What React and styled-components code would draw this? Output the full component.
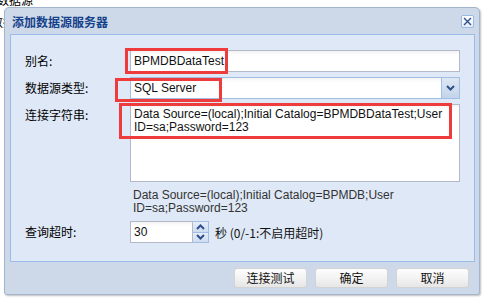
import React from 'react';
import styled, { createGlobalStyle } from 'styled-components';

const GlobalStyle = createGlobalStyle`
  html, body {
    margin: 0;
    padding: 0;
    background: #ffffff;
  }
  body {
    width: 488px;
    height: 303px;
    overflow: hidden;
    position: relative;
    font-family: 'Liberation Sans', 'Noto Sans CJK SC', sans-serif;
    font-size: 12px;
    color: #000;
  }
`;

const cjk = `'Noto Sans CJK SC', 'Liberation Sans', sans-serif`;
const latin = `'Liberation Sans', 'Noto Sans CJK SC', sans-serif`;

const PageBehind = styled.div`
  font-family: ${cjk};
  font-size: 12px;
  line-height: 22px;
  margin-top: -11px;
  margin-left: -9px;
  color: #000;
`;

const Dialog = styled.div`
  position: absolute;
  left: 4px;
  top: 7px;
  width: 476px;
  height: 288px;
  box-sizing: border-box;
  background: #cdd9e8;
  border: 1px solid #a3b5cc;
  border-radius: 5px 5px 3px 3px;
  box-shadow: 1px 1px 2px rgba(0, 0, 0, 0.25);
  display: flex;
  flex-direction: column;
`;

const Header = styled.div`
  height: 26px;
  display: flex;
  align-items: center;
  justify-content: space-between;
  padding: 0 5px 0 7px;
`;

const Title = styled.div`
  font-family: ${cjk};
  font-weight: bold;
  font-size: 12px;
  color: #15428b;
`;

const CloseButton = styled.div`
  width: 13px;
  height: 13px;
  box-sizing: border-box;
  border: 1px solid #99bbe8;
  border-radius: 2px;
  background: linear-gradient(#ffffff, #e4edf8);
  display: flex;
  align-items: center;
  justify-content: center;
`;

const Body = styled.div`
  margin: 0 4px 0 5px;
  height: 228px;
  box-sizing: border-box;
  background: #dfe8f6;
  border: 1px solid #99bbe8;
  padding: 15px 14px 0 14px;
  display: grid;
  grid-template-columns: 105px 330px;
  grid-template-rows: 22px 22px 78px 29px 22px;
  row-gap: 5px;
  align-items: start;
  overflow: hidden;
`;

const Label = styled.div`
  font-family: ${cjk};
  font-size: 12px;
  height: 22px;
  line-height: 22px;
`;

const FieldWrap = styled.div`
  position: relative;
  height: 100%;
`;

const TextBox = styled.div`
  height: 22px;
  box-sizing: border-box;
  border: 1px solid ${(p) => (p.$blue ? '#a3bee4' : '#b5b8c8')};
  background: linear-gradient(#f2f2f2, #ffffff 4px);
  font-family: ${latin};
  font-size: 12px;
  line-height: 20px;
  padding-left: 3px;
  display: flex;
  align-items: center;
  justify-content: space-between;
  color: #111;
`;

const Trigger = styled.div`
  width: 18px;
  height: 20px;
  box-sizing: border-box;
  border-left: 1px solid #a3bee4;
  background: linear-gradient(#dde7f4, #c3d4ea);
  display: flex;
  align-items: center;
  justify-content: center;
`;

const TextArea = styled.div`
  height: 78px;
  box-sizing: border-box;
  border: 1px solid #b5b8c8;
  background: linear-gradient(#f2f2f2, #ffffff 4px);
  font-family: ${latin};
  font-size: 12px;
  line-height: 13px;
  padding: 3px 3px 0 3px;
  color: #111;
`;

const RedMark = styled.div`
  position: absolute;
  left: ${(p) => p.$l}px;
  top: ${(p) => p.$t}px;
  width: ${(p) => p.$w}px;
  height: ${(p) => p.$h}px;
  box-sizing: border-box;
  border: 3px solid #ee3b3b;
  pointer-events: none;
`;

const Hint = styled.div`
  grid-column: 2;
  font-family: ${latin};
  font-size: 12px;
  line-height: 13px;
  color: #333;
  margin-top: 2px;
  padding-left: 3px;
`;

const SpinRow = styled.div`
  display: flex;
  align-items: center;
`;

const SpinInput = styled(TextBox)`
  width: 63px;
`;

const SpinButtons = styled.div`
  width: 16px;
  height: 22px;
  box-sizing: border-box;
  border: 1px solid #a3bee4;
  border-left: none;
  display: flex;
  flex-direction: column;
`;

const SpinHalf = styled.div`
  flex: 1;
  display: flex;
  align-items: center;
  justify-content: center;
  background: linear-gradient(#e6eef9, #cddcf0);
  border-bottom: ${(p) => (p.$top ? '1px solid #a3bee4' : 'none')};
`;

const Unit = styled.span`
  font-family: ${cjk};
  font-size: 12px;
  margin-left: 6px;
  color: #111;
`;

const Footer = styled.div`
  flex: 1;
  display: flex;
  justify-content: flex-end;
  align-items: flex-start;
  padding: 6px 10px 0 0;
  gap: 8px;
`;

const Button = styled.div`
  width: 73px;
  height: 20px;
  box-sizing: border-box;
  border: 1px solid #d3d3d3;
  border-radius: 3px;
  background: linear-gradient(#fdfdfd, #f3f3f3 50%, #e6e6e6);
  font-family: ${cjk};
  font-size: 12px;
  line-height: 18px;
  text-align: center;
  color: #111;
`;

const Chevron = ({ up }) => (
  <svg width={9} height={6} viewBox="0 0 9 6">
    <path
      d={up ? 'M1 5 L4.5 1.5 L8 5' : 'M1 1 L4.5 4.5 L8 1'}
      fill="none"
      stroke="#2e4f8c"
      strokeWidth="2"
    />
  </svg>
);

const App = () => {
  return (
    <>
      <GlobalStyle />
      <PageBehind>
        x数据源
        <br />
        数据
      </PageBehind>
      <Dialog>
        <Header>
          <Title>添加数据源服务器</Title>
          <CloseButton>
            <svg width="9" height="9" viewBox="0 0 9 9">
              <path d="M1 1 L8 8 M8 1 L1 8" stroke="#2e4f8c" strokeWidth="1.4" />
            </svg>
          </CloseButton>
        </Header>
        <Body>
          <Label>别名:</Label>
          <FieldWrap>
            <TextBox>BPMDBDataTest</TextBox>
            <RedMark $l={-5} $t={-2} $w={103} $h={26} />
          </FieldWrap>

          <Label>数据源类型:</Label>
          <FieldWrap>
            <TextBox $blue>
              SQL Server
              <Trigger>
                <Chevron />
              </Trigger>
            </TextBox>
            <RedMark $l={-15} $t={1} $w={107} $h={24} />
          </FieldWrap>

          <Label>连接字符串:</Label>
          <FieldWrap>
            <TextArea>
              Data Source=(local);Initial Catalog=BPMDBDataTest;User
              <br />
              ID=sa;Password=123
            </TextArea>
            <RedMark $l={-11} $t={-1} $w={333} $h={36} />
          </FieldWrap>

          <Hint>
            Data Source=(local);Initial Catalog=BPMDB;User
            <br />
            ID=sa;Password=123
          </Hint>

          <Label>查询超时:</Label>
          <SpinRow>
            <SpinInput>30</SpinInput>
            <SpinButtons>
              <SpinHalf $top>
                <Chevron up />
              </SpinHalf>
              <SpinHalf>
                <Chevron />
              </SpinHalf>
            </SpinButtons>
            <Unit>秒 (0/-1:不启用超时)</Unit>
          </SpinRow>
        </Body>
        <Footer>
          <Button>连接测试</Button>
          <Button>确定</Button>
          <Button>取消</Button>
        </Footer>
      </Dialog>
    </>
  );
};

export default App;
